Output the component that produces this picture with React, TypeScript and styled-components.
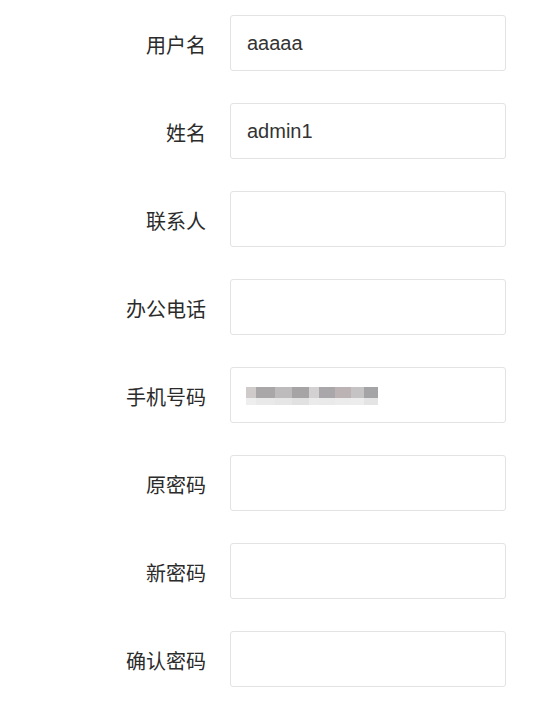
import React from 'react'
import styled, { createGlobalStyle } from 'styled-components'

const GlobalStyle = createGlobalStyle`
  html, body {
    margin: 0;
    padding: 0;
    background: #fff;
  }
  body {
    font-family: "Liberation Sans", "Noto Sans CJK SC", sans-serif;
    color: #333;
  }
`

const Form = styled.form`
  display: grid;
  grid-template-columns: 206px 276px;
  grid-auto-rows: 56px;
  column-gap: 24px;
  row-gap: 32px;
  padding-top: 15px;
  align-items: center;
`

const Label = styled.label`
  text-align: right;
  font-family: "Noto Sans CJK SC", sans-serif;
  font-size: 20px;
  line-height: 1;
  color: #2b2b2b;
  padding-top: 4px;
`

const Field = styled.div`
  box-sizing: border-box;
  height: 56px;
  border: 1px solid #e3e3e3;
  border-radius: 3px;
  background: #fff;
  display: flex;
  align-items: center;
  padding: 0 16px;
`

const Input = styled.input`
  border: none;
  outline: none;
  width: 100%;
  padding: 0;
  background: transparent;
  font-family: "Liberation Sans", Arial, sans-serif;
  font-size: 20px;
  color: #333;
`

const Blurred = styled.div`
  display: flex;
  height: 18px;
  margin-top: 2px;
  margin-left: -1px;
`

const Pixel = styled.span<{ $top: string; $bottom: string; $w: number }>`
  flex: none;
  width: ${(p) => p.$w}px;
  height: 100%;
  background: linear-gradient(${(p) => p.$top} 0 60%, ${(p) => p.$bottom} 60% 100%);
`

const pixels = [
  { w: 10, t: '#cfcbcb', b: '#eeeeee' },
  { w: 19, t: '#a9a7a8', b: '#e9e9e9' },
  { w: 17, t: '#bdbbbc', b: '#e6e6e6' },
  { w: 17, t: '#a6a4a5', b: '#e1e1e1' },
  { w: 10, t: '#d3d1d1', b: '#ebebeb' },
  { w: 16, t: '#a9a7aa', b: '#eaeaea' },
  { w: 16, t: '#bcb4b4', b: '#ececec' },
  { w: 13, t: '#c6c3c4', b: '#ededed' },
  { w: 14, t: '#a4a3a6', b: '#e4e4e4' },
]

const rows: { label: string; value?: string; blurred?: boolean }[] = [
  { label: '用户名', value: 'aaaaa' },
  { label: '姓名', value: 'admin1' },
  { label: '联系人' },
  { label: '办公电话' },
  { label: '手机号码', blurred: true },
  { label: '原密码' },
  { label: '新密码' },
  { label: '确认密码' },
]

const App = () => {
  return (
    <>
      <GlobalStyle />
      <Form onSubmit={(e) => e.preventDefault()}>
        {rows.map((r) => (
          <React.Fragment key={r.label}>
            <Label>{r.label}</Label>
            <Field>
              {r.blurred ? (
                <Blurred>
                  {pixels.map((p, i) => (
                    <Pixel key={i} $w={p.w} $top={p.t} $bottom={p.b} />
                  ))}
                </Blurred>
              ) : (
                <Input defaultValue={r.value || ''} />
              )}
            </Field>
          </React.Fragment>
        ))}
      </Form>
    </>
  )
}

export default App
